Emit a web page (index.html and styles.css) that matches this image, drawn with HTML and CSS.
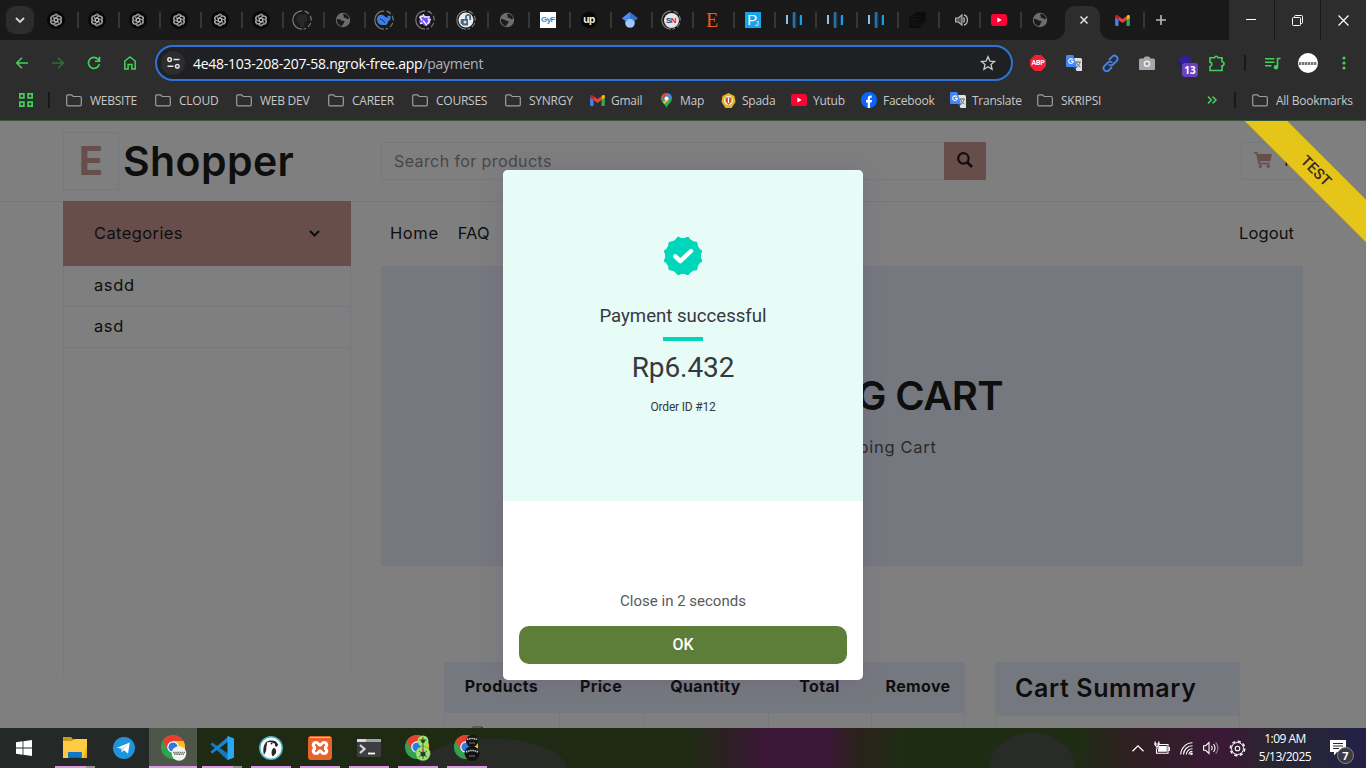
FILE: index.html
```html
<!DOCTYPE html>
<html lang="en">
<head>
<meta charset="utf-8">
<title>E Shopper - Payment</title>
<link rel="stylesheet" href="styles.css">
</head>
<body>
<svg class="defs" width="0" height="0">
  <symbol id="gpt" viewBox="0 0 18 18"><circle cx="9" cy="9" r="9" fill="#070707"/><g fill="none" stroke="#b4b6b9" stroke-width=".9"><path id="petal" d="M9 7.200 6.800 8.400V5.300a2.300 2.300 0 0 1 4.300-1.100M9 7.200l2.600 1.500"/><use href="#petal" transform="rotate(60 9 9)"/><use href="#petal" transform="rotate(120 9 9)"/><use href="#petal" transform="rotate(180 9 9)"/><use href="#petal" transform="rotate(240 9 9)"/><use href="#petal" transform="rotate(300 9 9)"/><circle cx="9" cy="9" r="5"/></g></symbol>
  <symbol id="ring" viewBox="0 0 20 20"><circle cx="10" cy="10" r="9.2" fill="none" stroke="#77797c" stroke-width="1.2" stroke-dasharray="28.9 2.5 5 2.3 5 2.3 5 2.3 2.5 2"  transform="rotate(90 10 10)"/></symbol>
  <symbol id="globe" viewBox="0 0 16 16"><circle cx="8" cy="8" r="7.200" fill="#6b6d70"/><path d="M8.500 1.800c2.800 0 5 1.900 5.600 4.400-.8 1.300-2.300 1.200-2.800.3-.4-.9-1.500-.4-2.300-.8-.9-.5.3-1.400-.5-2.200-.5-.6-.6-1.200 0-1.700zM1.900 7c1.500-.3 3 .2 4.300 1.200 1.200.9 2.900.2 3.300 1.400.4 1.300-1.200 1.600-1.500 2.600-.2.700-.3 1.400-.9 1.900C4.200 13.700 1.500 11 1.900 7z" fill="#1b1b1c"/></symbol>
  <symbol id="bars" viewBox="0 0 16 16"><path d="M0 3h2v9H0z" fill="#91bfe8"/><path d="M7 0h2.500v16H7z" fill="#2d6da6"/><path d="M14 3h2v10h-2z" fill="#18a0e0"/><path d="M6 1.500h1v13H6zM9.500 2h1v12h-1zM13 4h1v9h-1z" fill="#173854"/></symbol>
  <symbol id="gmail" viewBox="0 0 16 12"><path d="M0 2v9a1 1 0 0 0 1 1h2.600V4z" fill="#4285f4"/><path d="M12.400 4v8H15a1 1 0 0 0 1-1V2z" fill="#34a853"/><path d="M12.400 1.200v4.300L16 3V1.500c0-1.500-1.500-1.800-2.500-1.100z" fill="#fbbc04"/><path d="M3.600 5.500V1.200L8 4.500l4.400-3.300v4.300L8 8.800z" fill="#ea4335"/><path d="M0 1.500V3l3.600 2.500V1.200L2.500.4C1.500-.3 0 0 0 1.500z" fill="#c5221f"/></symbol>
  <symbol id="youtube" viewBox="0 0 16 12"><rect width="16" height="12" rx="2.800" fill="#ff0033"/><path d="M6.400 3.500v5L10.700 6z" fill="#fff"/></symbol>
  <symbol id="folder" viewBox="0 0 16 13"><path d="M.7 2a1.200 1.200 0 0 1 1.200-1.200h3.600l1.700 1.700h6.900a1.200 1.200 0 0 1 1.200 1.200v7a1.200 1.200 0 0 1-1.200 1.200H1.900A1.200 1.200 0 0 1 .7 10.700z" fill="none" stroke="#9c9ea1" stroke-width="1.200"/></symbol>
  <symbol id="translate" viewBox="0 0 16 16"><path d="M6 3h8.500A1.500 1.500 0 0 1 16 4.500V16h-5.500z" fill="#dfe1e3"/><path d="M9 7h6M12 6v1M10.500 7c.7 3 2 4.300 4 5M14 7c-.5 3-1.500 4-3.500 5.500" stroke="#66727a" stroke-width="1" fill="none"/><path d="M1.200 0h6L11 12H1.200A1.200 1.200 0 0 1 0 10.800V1.200A1.200 1.200 0 0 1 1.200 0z" fill="#4386f5"/><path d="M8 12h3l-2 3z" fill="#2653b5"/><path d="M6.800 4.700a2.300 2.300 0 1 0 .5 1.700H5" stroke="#fff" stroke-width="1.100" fill="none"/></symbol>
  <symbol id="chrome" viewBox="0 0 24 24"><circle cx="12" cy="12" r="12" fill="#31a350"/><path d="M12 6h10.400A12 12 0 0 1 12 24l5.200-9z" fill="#fbc116"/><path d="M1.600 6a12 12 0 0 1 20.800 0H12l-5.200 9z" fill="#e8402f"/><circle cx="12" cy="12" r="5.800" fill="#fff"/><circle cx="12" cy="12" r="4.600" fill="#3278df"/></symbol>
  <symbol id="cart" viewBox="0 0 18 16"><path d="M0 0h3.400l.5 2H18l-1.700 7.300H5.500l.3 1.500h9.900v1.700H4.300L2.200 1.700H0z"/><circle cx="6.300" cy="14.300" r="1.600"/><circle cx="14.200" cy="14.300" r="1.600"/></symbol>
</svg>

<div class="tabs">
  <button class="tab-search"><svg width="10" height="6" viewBox="0 0 10 6"><path d="m1 1 4 4 4-4" fill="none" stroke="#d6d7d8" stroke-width="1.800"/></svg></button>
  <div class="tab"><svg width="18" height="18"><use href="#gpt"/></svg></div>
  <div class="tab"><svg width="18" height="18"><use href="#gpt"/></svg></div>
  <div class="tab"><svg width="18" height="18"><use href="#gpt"/></svg></div>
  <div class="tab"><svg width="18" height="18"><use href="#gpt"/></svg></div>
  <div class="tab"><svg width="18" height="18"><use href="#gpt"/></svg></div>
  <div class="tab"><svg width="18" height="18"><use href="#gpt"/></svg></div>
  <div class="tab"><svg width="20" height="20" viewBox="0 0 20 20"><use href="#ring"/><path d="M7.700 17v-2.500c-2.500.3-2.300-1.200-3.400-1.700 1.400-.3 1.900 1.300 3.200.9.100-.4.300-.8.600-1-2.300-.4-3.600-1.600-3.600-4 0-1 .3-1.900.9-2.600-.2-.8-.1-1.700.2-2.300 1 0 1.900.5 2.500 1 1.200-.3 2.600-.3 3.800 0 .6-.5 1.500-1 2.500-1 .3.600.4 1.500.2 2.300.6.700.9 1.600.9 2.600 0 2.400-1.300 3.600-3.600 4 .5.500.6 1 .6 1.800V17z" fill="#26292b"/></svg></div>
  <div class="tab"><svg width="16" height="16"><use href="#globe"/></svg></div>
  <div class="tab"><svg width="20" height="20" viewBox="0 0 20 20"><use href="#ring"/><path d="M3 9c0-3 2.500-5 6-4 1.500 1.500 3 2 4 3 1-.3.500-2 1-2.500.8 1 2-.2 2.500.3C17 9 16 11 14 11.500c0 2-1 3-2 3.500H8c-3 0-5-3-5-6z" fill="#3e7de8"/><path d="M6 9c2 .5 4 2 5 4" stroke="#16294d" fill="none"/></svg></div>
  <div class="tab"><svg width="20" height="20" viewBox="0 0 20 20"><use href="#ring"/><path d="m8 4 2 2h4l2 3-1.500 2.500L15 14l-3 1-2 1.500L7.500 14H5l-1-3 1.500-2L5 6z" fill="#7450ee"/><path d="M8 4.500 9.500 7H15M15.500 9l-3 5M12 15.500l-4-5M5 13.500l2.500-.5M4.500 6.500 7 10.500M5 6.500h3M13 8.500l2 4" fill="none" stroke="#eeeaff" stroke-width="1.500"/></svg></div>
  <div class="tab"><svg width="20" height="20" viewBox="0 0 20 20"><use href="#ring"/><circle cx="10" cy="10" r="7.500" fill="#e9edf0"/><path d="M5 9h7v6.500H7L4.500 13z" fill="#47687e"/><path d="M10 9V7a2 2 0 0 1 4.200 0v3" fill="none" stroke="#47687e" stroke-width="1.800"/><circle cx="9" cy="12" r="1.500" fill="#d8e0e5"/></svg></div>
  <div class="tab"><svg width="16" height="16"><use href="#globe"/></svg></div>
  <div class="tab"><span class="fav fav-gyf">GyF</span></div>
  <div class="tab"><span class="fav fav-up">up</span></div>
  <div class="tab"><svg width="16" height="16" viewBox="0 0 16 16"><circle cx="8" cy="11" r="4.800" fill="#9fc9fb"/><path d="m8 0 8 6.200-4 3a4.600 4.600 0 0 0-8 0L0 6.200z" fill="#356fc7"/><path d="M8 0 0 6.200l4 3A4.500 4.500 0 0 1 8 6.500z" fill="#4b8df0"/></svg></div>
  <div class="tab"><span class="fav fav-sn"><svg width="20" height="20"><use href="#ring"/></svg><b>S<i>N</i></b></span></div>
  <div class="tab"><span class="fav fav-e">E</span></div>
  <div class="tab"><span class="fav fav-p">P<small>J</small></span></div>
  <div class="tab"><svg width="16" height="16"><use href="#bars"/></svg></div>
  <div class="tab"><svg width="16" height="16"><use href="#bars"/></svg></div>
  <div class="tab"><svg width="16" height="16"><use href="#bars"/></svg></div>
  <div class="tab"><svg width="17" height="16" viewBox="0 0 17 16"><path d="M1 5.500h10v10H1zM3.500 3h10v10M6 .8h10v10" fill="#111" stroke="#0a0a0a" stroke-width="1.200"/></svg></div>
  <div class="tab tab-audio"><svg width="13" height="12" viewBox="0 0 13 12"><path d="M.6 4v4h2.600L7 11V1L3.200 4z" fill="#555" stroke="#b4b5b6" stroke-width="1.100"/><path d="M8.500 3.500q1.800 2.500 0 5M9 1c4.500 1 4.500 9 0 10" fill="none" stroke="#b4b5b6" stroke-width="1.300"/></svg></div>
  <div class="tab"><svg width="16" height="12"><use href="#youtube"/></svg></div>
  <div class="tab last"><svg width="16" height="16"><use href="#globe"/></svg></div>
  <div class="tab-active"><svg width="8" height="8" viewBox="0 0 8 8"><path d="m.5.5 7 7m0-7-7 7" stroke="#e1e2e3" stroke-width="1.500"/></svg></div>
  <div class="tab tab-gmail"><svg width="15" height="11"><use href="#gmail"/></svg></div>
  <div class="tab-new"><svg width="10" height="10" viewBox="0 0 10 10"><path d="M5 0v10M0 5h10" stroke="#b9babb" stroke-width="1.600"/></svg></div>
  <div class="win">
    <span><svg width="10" height="10" viewBox="0 0 10 10"><path d="M0 4.500h10" stroke="#fff"/></svg></span>
    <span><svg width="11" height="11" viewBox="0 0 11 11"><path d="M2.500 2.500V1.500Q2.500.5 3.500.5h6q1 0 1 1v6q0 1-1 1h-1" fill="none" stroke="#fff"/><rect x=".5" y="2.500" width="8" height="8" rx="1" fill="none" stroke="#fff"/></svg></span>
    <span><svg width="11" height="11" viewBox="0 0 11 11"><path d="m.5.5 10 10m0-10-10 10" stroke="#fff" stroke-width="1.200"/></svg></span>
  </div>
</div>

<div class="toolbar">
  <svg class="nav" width="16" height="16" viewBox="0 0 16 16"><path d="M14 8H3m5-5.300L2.700 8 8 13.300" fill="none" stroke="#42d257" stroke-width="1.600"/></svg>
  <svg class="nav" width="16" height="16" viewBox="0 0 16 16"><path d="M2 8h11M8 2.700 13.300 8 8 13.300" fill="none" stroke="#2e6e38" stroke-width="1.600"/></svg>
  <svg class="nav" width="16" height="16" viewBox="0 0 16 16"><path d="M13.300 9A5.500 5.500 0 1 1 12 4.200L13.500 6M13.500 1.800V6.300H9" fill="none" stroke="#42d257" stroke-width="1.600"/></svg>
  <svg class="nav" width="16" height="16" viewBox="0 0 16 16"><path d="M2.800 14V6L8 2l5.200 4v8H9.900V9.500H6.100V14z" fill="none" stroke="#42d257" stroke-width="1.500"/></svg>
  <div class="url">
    <span class="site"><svg width="13" height="12" viewBox="0 0 13 12"><g fill="none" stroke="#e4e5e6" stroke-width="1.500"><circle cx="2.600" cy="2.600" r="1.800"/><path d="M6.500 2.600h6M.5 9.200h6"/><circle cx="10.300" cy="9.200" r="1.800"/></g></svg></span>
    <span class="addr">4e48-103-208-207-58.ngrok-free.app<i>/payment</i></span>
    <svg width="16" height="16" viewBox="0 0 16 16"><path d="m8 1.700 1.900 4.400 4.700.4L11 9.600l1.100 4.700L8 11.800l-4.100 2.500L5 9.600 1.400 6.500l4.700-.4z" fill="none" stroke="#c9cacc" stroke-width="1.300"/></svg>
  </div>
  <div class="ext">
    <span class="abp">ABP</span>
    <svg width="16" height="16"><use href="#translate"/></svg>
    <svg width="17" height="17" viewBox="0 0 17 17"><g fill="none" stroke="#3f83ec" stroke-width="1.900"><path d="m7 5 3-3.200a2.900 2.900 0 0 1 4.700 4L11 9.500a2.900 2.900 0 0 1-4.300-.2"/><path d="m10 12-3 3.200a2.900 2.900 0 0 1-4.700-4L6 7.500a2.900 2.900 0 0 1 4.300.2"/></g></svg>
    <svg width="16" height="14" viewBox="0 0 16 14"><path d="M1.500 2.500h3L6 .5h4l1.500 2h3A1.500 1.500 0 0 1 16 4v9a1 1 0 0 1-1 1H1a1 1 0 0 1-1-1V4a1.500 1.500 0 0 1 1.500-1.500z" fill="#a5a7aa"/><circle cx="8" cy="7.700" r="3.300" fill="#eee"/><circle cx="8" cy="7.700" r="1.800" fill="#89a"/></svg>
    <span class="badge-ext"><svg width="17" height="16" viewBox="0 0 17 16"><path d="m8 0 8 5-8 5-8-5z" fill="#371aa0"/><path d="m0 5 8 6v5l-7-5z" fill="#1b2a56"/></svg><b>13</b></span>
    <svg width="18" height="17" viewBox="0 0 18 17"><path d="M2 2.700h4.500A1.800 1.800 0 0 1 10 2.700h4v4a1.800 1.800 0 0 1 0 4V15.500H2v-4c2.500-.4 2.500-4 0-4.400z" fill="none" stroke="#42d257" stroke-width="1.600"/></svg>
  </div>
  <i class="vsep"></i>
  <svg class="media" width="16" height="13" viewBox="0 0 16 13"><path d="M0 1.800h9.500M0 5.300h9.500M0 8.800h6.500M12.500 10V1.500H15.500" fill="none" stroke="#42d257" stroke-width="1.600"/><circle cx="11" cy="10.300" r="2.200" fill="#42d257"/></svg>
  <span class="avatar"></span>
  <svg class="dots" width="4" height="14" viewBox="0 0 4 14"><g fill="#42d257"><circle cx="2" cy="2" r="1.600"/><circle cx="2" cy="7" r="1.600"/><circle cx="2" cy="12" r="1.600"/></g></svg>
</div>

<div class="bookmarks">
  <span class="bm-apps"><svg width="14" height="14" viewBox="0 0 14 14"><path d="M.9.900h4v4h-4zM9.100.900h4v4h-4zM.9 9.100h4v4h-4zM9.100 9.100h4v4h-4z" fill="none" stroke="#42d257" stroke-width="1.700"/></svg><i class="vsep"></i></span>
  <span class="bm"><svg width="16" height="13"><use href="#folder"/></svg>WEBSITE</span>
  <span class="bm"><svg width="16" height="13"><use href="#folder"/></svg>CLOUD</span>
  <span class="bm"><svg width="16" height="13"><use href="#folder"/></svg>WEB DEV</span>
  <span class="bm"><svg width="16" height="13"><use href="#folder"/></svg>CAREER</span>
  <span class="bm"><svg width="16" height="13"><use href="#folder"/></svg>COURSES</span>
  <span class="bm"><svg width="16" height="13"><use href="#folder"/></svg>SYNRGY</span>
  <span class="bm site-bm"><svg width="15" height="11"><use href="#gmail"/></svg>Gmail</span>
  <span class="bm site-bm"><svg width="15" height="15" viewBox="0 0 15 15"><path d="M2 5.500a5.500 5.500 0 0 1 11 0C13 9 9 11 7.500 15 6 11 2 9 2 5.500z" fill="#34a853"/><path d="M3 2.300A5.500 5.500 0 0 1 9 .2L4 7z" fill="#ea4335"/><path d="M9 .2a5.500 5.500 0 0 1 3.500 3L6 11 3.500 9z" fill="#4285f4"/><path d="m9 5.500-5.500 3.700L5.700 11l4-4z" fill="#fbbc04"/><circle cx="7.500" cy="5.500" r="2" fill="#fff"/></svg>Map</span>
  <span class="bm site-bm"><svg width="15" height="15" viewBox="0 0 15 15"><path d="m7.500 0 6 3 1 6-4 6h-6l-4-6 1-6z" fill="#e2b71f"/><circle cx="7.500" cy="7.500" r="4.500" fill="#f4efe2"/><path d="M4.500 4.500h6v4l-3 3.500-3-3.500z" fill="#dc5a28"/><path d="M7 5h1v5H7z" fill="#fff"/></svg>Spada</span>
  <span class="bm site-bm"><svg width="16" height="12"><use href="#youtube"/></svg>Yutub</span>
  <span class="bm site-bm"><svg width="16" height="16" viewBox="0 0 16 16"><circle cx="8" cy="8" r="8" fill="#0866ff"/><path d="M6.700 16v-5.500H5V8h1.700V6.800c0-2.300 1.200-3.500 4-3.200v2.100C9.200 5.600 9 6 9 6.900V8h2l-.4 2.500H9V16z" fill="#fff"/></svg>Facebook</span>
  <span class="bm site-bm"><svg width="16" height="16"><use href="#translate"/></svg>Translate</span>
  <span class="bm"><svg width="16" height="13"><use href="#folder"/></svg>SKRIPSI</span>
  <span class="bm-more"><svg width="10" height="8" viewBox="0 0 10 8"><path d="m1 .6 3.400 3.400L1 7.400M5.600.6 9 4 5.600 7.400" fill="none" stroke="#42d257" stroke-width="1.500"/></svg><i class="vsep"></i></span>
  <span class="bm"><svg width="16" height="13"><use href="#folder"/></svg>All Bookmarks</span>
</div>

<div class="viewport">
  <div class="shop">
    <header class="top">
      <div class="logo"><span class="logo-e">E</span><span class="logo-t">Shopper</span></div>
      <div class="search"><span class="field">Search for products</span><span class="go"><svg width="16" height="16" viewBox="0 0 16 16"><circle cx="6.400" cy="6.400" r="5.200" fill="none" stroke="#1c1c1c" stroke-width="2.200"/><path d="m10.500 10.500 4.500 4.500" stroke="#1c1c1c" stroke-width="2.600"/></svg></span></div>
      <div class="cart"><svg width="18" height="16" fill="#d19c97"><use href="#cart"/></svg><span>1</span></div>
    </header>
    <div class="main">
      <aside class="side">
        <div class="cat"><span>Categories</span><svg width="11" height="7" viewBox="0 0 11 7"><path d="m1 1 4.500 4.500L10 1" fill="none" stroke="#1c1c1c" stroke-width="2.100"/></svg></div>
        <div class="cats"><div>asdd</div><div>asd</div></div>
      </aside>
      <section class="content">
        <nav class="menu"><span class="m-home">Home</span><span class="m-faq">FAQ</span><span class="m-out">Logout</span></nav>
        <div class="banner"><h1>SHOPPING CART</h1><p>Home - Shopping Cart</p></div>
      </section>
    </div>
    <div class="lower">
      <div class="table">
        <div class="th"><span>Products</span><span>Price</span><span>Quantity</span><span>Total</span><span>Remove</span></div>
        <div class="tr"><span><svg width="14" height="16" viewBox="0 0 14 16"><path d="M1 16V1h9l3 3v12M10 1v3h3" fill="none" stroke="#777" stroke-width="1"/></svg></span><span></span><span></span><span></span><span></span></div>
      </div>
      <div class="summary"><h4>Cart Summary</h4><div></div></div>
    </div>
  </div>
  <div class="overlay">
    <div class="modal">
      <div class="paid">
        <svg width="40" height="40" viewBox="0 0 40 40"><g fill="#00d6b9"><rect x="5.400" y="5.400" width="29.200" height="29.200" rx="2.500"/><rect x="5.400" y="5.400" width="29.200" height="29.200" rx="2.500" transform="rotate(30 20 20)"/><rect x="5.400" y="5.400" width="29.200" height="29.200" rx="2.500" transform="rotate(60 20 20)"/><circle cx="20" cy="20" r="18"/></g><path d="m12.300 20.300 5 4.800L28 15" fill="none" stroke="#fff" stroke-width="4.400" stroke-linecap="round" stroke-linejoin="round"/></svg>
        <p class="ok-title">Payment successful</p>
        <i class="rule"></i>
        <p class="amount">Rp6.432</p>
        <p class="order">Order ID #12</p>
      </div>
      <div class="foot"><p>Close in 2 seconds</p><button>OK</button></div>
    </div>
    <div class="ribbon"><span>TEST</span></div>
  </div>
</div>

<div class="taskbar">
  <span class="app start"><svg width="16" height="16" viewBox="0 0 16 16"><path d="M0 2.200 6.600 1.300V7.600H0zM7.400 1.200 16 0v7.600H7.400zM0 8.400h6.600v6.300L0 13.800zM7.400 8.400H16V16l-8.600-1.200z" fill="#fff"/></svg></span>
  <span class="app run more"><svg width="24" height="22" viewBox="0 0 24 22"><path d="M0 0h8l2 2v3H0z" fill="#c89b1a"/><path d="M0 4h9l2-2h13v19H0z" fill="#ffcb45"/><path d="m24 9-4 12h4z" fill="#efad1c"/><path d="M5 21v-5q0-1 1-1h12q1 0 1 1v5z" fill="#1277c4"/><path d="M8 20h8v1H8z" fill="#0b5fa0"/></svg></span>
  <span class="app"><svg width="22" height="22" viewBox="0 0 22 22"><circle cx="11" cy="11" r="11" fill="#1f94dc"/><path d="M4 10.800 16.800 5.500 15 16.500l-4.200-3.200-2 2-.4-3.500z" fill="#fff"/><path d="m8.400 11.800 6-4.300-4.500 5.300-1 2.500z" fill="#b9daf0"/></svg></span>
  <span class="app run active"><svg width="26" height="26" viewBox="0 0 26 26"><use href="#chrome" width="24" height="24"/><circle cx="18" cy="18.500" r="7.300" fill="#f3f3f1"/><path d="M12 17.500h12m-11 1.700h10" stroke="#777" stroke-width="1.400" stroke-dasharray="1.600 .6"/></svg></span>
  <span class="app run more"><svg width="24" height="24" viewBox="0 0 24 24"><path d="m.4 8.200 1.800-1.700L24 21.500 17.500 24z" fill="#1478c0"/><path d="m.4 15.800 1.800 1.700L19 5V0z" fill="#1b84cf"/><path d="M17.500 7v10l-6.700-5z" fill="#1f2a14"/><path d="m17.500 0 6.500 2.500v19L17.500 24z" fill="#29a8f2"/></svg></span>
  <span class="app run"><svg width="24" height="24" viewBox="0 0 24 24"><circle cx="12" cy="12" r="11.200" fill="#fbfbfb" stroke="#48b6ca" stroke-width="1.500"/><path d="M5 19C3.500 14 4.500 8 8 5.500 10 4 14 4 17 5.500l2 3-1.500 2-3-.5-1-2-3-1.500C8 8 7 11 7.500 14z" fill="#2b2523"/><path d="M8 6.500q4-1 6 .5l3 1-.5 2.500-4 1-1.500 4.500-4 3z" fill="#fff"/><path d="M14.500 12c2 0 3 2.500 2.500 5l-3 3.500c-2-2-2-6 .5-8.500z" fill="#2b2523"/><circle cx="12.500" cy="7.500" r="1" fill="#2b2523"/><path d="m16 7 3 1-1 2.500-2-.5z" fill="#2b2523"/></svg></span>
  <span class="app run"><svg width="24" height="24" viewBox="0 0 24 24"><rect width="24" height="24" rx="3" fill="#e8632b"/><path d="M2 1.500h20" stroke="#f9bd96"/><path d="M8 6.500c-3 0-3.500 3.500-1.500 4.500v2C4.500 14 5 17.500 8 17.500s2.500-2.800 4-2.800 1 2.800 4 2.800 3.500-3.500 1.500-4.500v-2c2-1 1.500-4.500-1.500-4.500s-2.500 2.800-4 2.800-1-2.800-4-2.800z" fill="none" stroke="#fff" stroke-width="3"/></svg></span>
  <span class="app run"><svg width="24" height="18" viewBox="0 0 24 18"><rect width="24" height="18" rx="1" fill="#3d3d42"/><path d="M0 0h24v3H0z" fill="#a1a3a5"/><path d="M0 0h9v3H0z" fill="#d8dadc"/><path d="m3 6 4.500 4L3 14" fill="none" stroke="#d4d5d6" stroke-width="2.300"/><path d="M11 14.500h7" stroke="#fff" stroke-width="1.800"/></svg></span>
  <span class="app run"><svg width="26" height="26" viewBox="0 0 26 26"><use href="#chrome" width="24" height="24"/><circle cx="18" cy="6" r="5.500" fill="#9ae375"/><circle cx="18" cy="18.500" r="7.300" fill="#9ae375" stroke="#52843c" stroke-dasharray="1.500 1.500"/><path d="M18 2v22M14.500 5h7M14 16l8 6m0-6-8 6" stroke="#3e6b38" stroke-width="1"/><circle cx="18" cy="6" r="2" fill="#233d25"/><circle cx="18" cy="19" r="2.500" fill="#233d25"/><circle cx="18" cy="16" r="1.200" fill="#e34f38"/><circle cx="18" cy="4" r="1" fill="#e34f38"/></svg></span>
  <span class="app run"><svg width="26" height="26" viewBox="0 0 26 26"><use href="#chrome" width="24" height="24"/><circle cx="18" cy="6" r="6" fill="#121212"/><circle cx="18" cy="18.500" r="7.500" fill="#121212"/><path d="M13 4.500q5-2 10 0M12 17q6-3 12 0" fill="none" stroke="#c7c7c7" stroke-width="1.700" stroke-dasharray="1.500 .7"/><path d="M15 8h6M15 21h6" stroke="#777"/></svg></span>
  <div class="tray">
    <svg width="12" height="7" viewBox="0 0 12 7"><path d="m.5 6.300 5.500-5.500 5.500 5.500" fill="none" stroke="#fff" stroke-width="1.300"/></svg>
    <svg width="16" height="14" viewBox="0 0 16 14"><path d="M5 3.500h9v8.700H2.500V8" fill="none" stroke="#fff" stroke-width="1.100"/><path d="M4.500 5h8.300v5.700H4zM14.500 6H16v4h-1.500z" fill="#fff"/><path d="M1.200.5v3a1.800 1.800 0 0 0 3.600 0v-3M0 3h6M3 5v3" stroke="#fff" stroke-width="1.200" fill="none"/></svg>
    <svg width="13" height="13" viewBox="0 0 13 13"><g fill="none" stroke="#fff" stroke-width="1.100"><path d="M.7 12.500A12 12 0 0 1 12.500.8M3.500 12.500A9 9 0 0 1 12.500 3.700M6.300 12.500a6 6 0 0 1 6.200-5.800"/><path d="M9 12.500a3.500 3.500 0 0 1 3.500-3.300"/></g><circle cx="11.500" cy="11.700" r="1.300" fill="#fff"/></svg>
    <svg width="16" height="14" viewBox="0 0 16 14"><path d="M.6 4.700v4.600h2L6 12.500v-11L2.600 4.700z" fill="none" stroke="#fff" stroke-width="1.100"/><path d="M8.500 4.700q1.500 2.300 0 4.600M10.500 3q3 4 0 8" fill="none" stroke="#fff" stroke-width="1.100"/><path d="M12.700 1.300q4.500 5.700 0 11.400" fill="none" stroke="#888" stroke-width="1.100"/></svg>
    <svg width="17" height="17" viewBox="0 0 17 17"><circle cx="8.500" cy="8.500" r="7.200" fill="none" stroke="#fff" stroke-width="1.500" stroke-dasharray="3.200 2.450"/><circle cx="8.500" cy="8.500" r="6" fill="none" stroke="#fff"/><circle cx="8.500" cy="8.500" r="2.300" fill="none" stroke="#fff" stroke-width="1.100"/></svg>
    <div class="clock"><span>1:09 AM</span><span>5/13/2025</span></div>
    <div class="note"><svg width="16" height="16" viewBox="0 0 16 16"><path d="M0 0h16v12H7l-3 3.500V12H0z" fill="#fff"/><path d="M3 3.500h10M3 6h10M3 8.500h6" stroke="#26253a"/></svg><b>7</b></div>
  </div>
</div>
</body>
</html>
```
FILE: styles.css
```css
* { box-sizing: border-box; }
body {
  margin: 0;
  width: 1366px;
  height: 768px;
  overflow: hidden;
  display: flex;
  flex-direction: column;
  background: #2d2d2d;
  font-family: "Open Sans", "Noto Sans", sans-serif;
}
svg { display: block; flex: none; overflow: visible; }
p, h1, h4 { margin: 0; }
button { border: 0; padding: 0; }
.defs { position: absolute; }

/* tab strip */
.tabs { display: flex; height: 40px; flex: none; background: #191919; }
.tab-search {
  width: 28px; height: 28px; margin: 6px 4px 6px 6px; border-radius: 9px;
  background: #2d2d2d; display: flex; align-items: center; justify-content: center;
}
.tab {
  width: 41px; height: 40px; flex: none; padding-right: 5px;
  display: flex; align-items: center; justify-content: center;
  background: linear-gradient(#363636, #363636) 39px 12px / 2px 16px no-repeat;
}
.tab.last { width: 43px; background: none; padding: 0 7px 0 0; }
.tab-audio { padding-left: 5px; padding-right: 4px; }
.tab-active {
  width: 35px; height: 34px; margin-top: 6px; background: #2d2d2d; border-radius: 10px 10px 0 0;
  display: flex; align-items: center; justify-content: center; padding: 0 0 6px 3px; position: relative;
  flex: none;
}
.tab-active::before, .tab-active::after {
  content: ""; position: absolute; bottom: 0; width: 11px; height: 11px;
}
.tab-active::before { left: -11px; background: radial-gradient(circle at 0 0, transparent 10.500px, #2d2d2d 11px); }
.tab-active::after { right: -11px; background: radial-gradient(circle at 100% 0, transparent 10.500px, #2d2d2d 11px); }
.tab-gmail { width: 45px; padding: 0; background-position: 43px 12px; }
.tab-new { width: 31px; display: flex; align-items: center; justify-content: center; }
.fav { display: flex; align-items: center; justify-content: center; width: 16px; height: 16px; line-height: 16px; }
.fav-gyf { background: #fff; color: #4f81a8; font: bold 8px/16px "Liberation Sans", sans-serif; letter-spacing: -.6px; }
.fav-up { background: #060606; color: #eee; border-radius: 50%; font: bold 10px/13px "Inter", sans-serif; letter-spacing: -.5px; padding-bottom: 2px; }
.fav-sn { position: relative; width: 20px; height: 20px; }
.fav-sn svg { position: absolute; inset: 0; }
.fav-sn b { width: 15px; height: 15px; border-radius: 50%; background: #e3e5e9; color: #263a68; font: bold 8px/15px "Liberation Sans", sans-serif; text-align: center; letter-spacing: -.5px; }
.fav-sn i { color: #d22; font-style: normal; }
.fav-e { color: #f1571f; font: 20px/16px "Liberation Serif", serif; }
.fav-p { background: #18a4ec; color: #fff; font: 15px/16px "Liberation Sans", sans-serif; }
.fav-p small { font-size: 7px; align-self: flex-end; line-height: 9px; margin-left: -2px; }
.win { margin-left: auto; width: 137px; display: flex; background: #2d2d2d; }
.win span { flex: 1; display: flex; align-items: center; justify-content: center; padding-right: 1px; }
.win span + span { border-left: 1px solid #191919; }

/* toolbar */
.toolbar { display: flex; align-items: center; height: 46px; flex: none; padding: 0 20px 0 14px; }
.nav { margin-right: 20px; }
.url {
  width: 858px; height: 36px; margin-left: -3px; border: 2px solid #2e73d8; border-radius: 18px; background: #1f2023;
  display: flex; align-items: center; padding: 0 15px 0 4px;
}
.site { width: 24px; height: 24px; border-radius: 50%; background: #2d2d2d; display: flex; align-items: center; justify-content: center; }
.addr { margin-left: 8px; flex: 1; font-size: 14px; letter-spacing: -.27px; color: #fff; }
.addr i { font-style: normal; color: #b1b3b6; }
.ext { margin-left: 17px; width: 198px; display: flex; align-items: center; gap: 20px; }
.abp {
  width: 16px; height: 16px; background: #f41f35; color: #fff; font: bold 7px/16px "Roboto", sans-serif; text-align: center; letter-spacing: -.2px;
  clip-path: polygon(30% 0, 70% 0, 100% 30%, 100% 70%, 70% 100%, 30% 100%, 0 70%, 0 30%);
}
.badge-ext { position: relative; width: 20px; margin-left: 2px; }
.badge-ext + svg { margin-left: -9px; }
.badge-ext b {
  position: absolute; left: 5px; top: 8px; width: 16px; height: 14px; border-radius: 3px; background: #6b3fc6; color: #fff;
  font: bold 10px/14px "Open Sans", sans-serif; text-align: center;
}
.vsep { width: 2px; height: 16px; background: #191919; flex: none; }
.toolbar > .vsep { margin-left: 16px; }
.media { margin-left: 19px; }
.avatar {
  width: 20px; height: 20px; border-radius: 50%; margin-left: 17px;
  background: repeating-linear-gradient(100deg, #777 0 2px, #ccc 2px 3px) 1px 9px / 18px 3px no-repeat #fff;
}
.dots { margin-left: 24px; }

/* bookmarks */
.bookmarks {
  height: 35px; flex: none; padding-left: 19px; display: grid; align-items: center; padding-bottom: 7px;
  grid-template-columns: 47px 89px 81px 92px 84px 93px 85px 69px 62px 70px 70px 89px 87px 170px 45px 110px;
  font-size: 12px; color: #c7c8ca; white-space: nowrap;
}
.bm { display: flex; align-items: center; gap: 8px; letter-spacing: -.25px; }
.site-bm { gap: 6px; }
.bm-apps { display: flex; align-items: center; gap: 15px; }
.bm-more { display: flex; align-items: center; gap: 17px; }

/* shop */
.viewport { height: 607px; flex: none; position: relative; overflow: hidden; background: #fff; }
.shop { height: 607px; font-family: "Inter", sans-serif; font-size: 16px; color: #1c1c1c; }
.top { height: 81px; border-bottom: 1px solid #edf1ff; display: flex; align-items: center; padding: 0 63px; }
.logo { display: flex; align-items: center; width: 318px; font-size: 41px; font-weight: 600; line-height: 56px; }
.logo-e { width: 56px; height: 58px; border: 1px solid #edf1ff; color: #d19c97; text-align: center; font-weight: 700; font-size: 40px; margin-right: 4px; }
.logo-t { letter-spacing: .4px; }
.search { width: 605px; height: 38px; display: flex; }
.field { flex: 1; border: 1px solid #edf1ff; border-right: 0; line-height: 36px; padding-left: 12px; color: #8f918b; letter-spacing: .4px; }
.go { width: 42px; background: #d19c97; display: flex; align-items: center; justify-content: center; padding-bottom: 2px; }
.cart { margin-left: auto; width: 62px; height: 38px; border: 1px solid #edf1ff; display: flex; align-items: center; gap: 10px; padding: 0 0 2px 12px; }
.cart span { line-height: 20px; }
.main { display: flex; padding-left: 63px; gap: 30px; height: 474px; margin-top: -1px; }
.side { width: 288px; }
.cat { height: 65px; background: #d19c97; display: flex; align-items: center; justify-content: space-between; padding: 0 31px; font-size: 16.5px; letter-spacing: .4px; }
.cat span { margin-top: -2px; }
.cats { height: 409px; border: 1px solid #edf1ff; border-width: 0 1px; }
.cats div { height: 41px; line-height: 38px; padding-left: 30px; border-bottom: 1px solid #edf1ff; font-size: 16.5px; letter-spacing: .6px; }
.content { width: 922px; }
.menu { height: 65px; display: flex; align-items: center; padding: 0 9px 2px; gap: 20px; font-size: 16.5px; }
.m-home { letter-spacing: .6px; }
.m-faq { letter-spacing: .1px; margin-left: -1px; }
.m-out { margin-left: auto; letter-spacing: .1px; }
.banner { height: 300px; background: #edf1ff; display: flex; flex-direction: column; align-items: center; padding-top: 102px; }
.banner h1 { font-size: 40px; line-height: 56px; font-weight: 600; letter-spacing: -.6px; }
.banner p { margin-top: 11px; line-height: 24px; color: #555; font-size: 16.5px; letter-spacing: .7px; }
.lower { display: flex; gap: 30px; padding-left: 444px; margin-top: -13px; }
.table { width: 521px; }
.th, .tr { display: grid; grid-template-columns: 115px 84px 125px 103px 94px; }
.th { height: 51px; background: #edf1ff; font-weight: 700; text-align: center; line-height: 49px; letter-spacing: .35px; }
.tr { height: 20px; }
.tr span { border-left: 1px solid #edf1ff; padding: 13px 0 0 27px; }
.tr span:last-child { border-right: 1px solid #edf1ff; }
.summary { width: 245px; }
.summary h4 { height: 54px; line-height: 53px; background: #edf1ff; padding-left: 20px; font-size: 25px; font-weight: 600; letter-spacing: .6px; }
.summary div { height: 20px; border: 1px solid #edf1ff; border-width: 0 1px; }

/* payment dialog */
.overlay { position: absolute; inset: 0; background: rgba(0, 0, 0, .5); border-top: 1px solid #34553a; font-family: "Roboto", sans-serif; }
.viewport { margin-top: -1px; height: 608px; padding-top: 1px; }
.modal {
  position: absolute; left: 503px; top: 49px; width: 360px; height: 510px; border-radius: 5px; overflow: hidden; background: #fff;
  display: flex; flex-direction: column; box-shadow: 0 0 24px rgba(75, 55, 115, .18);
}
.paid { height: 331px; background: #e7fbf7; display: flex; flex-direction: column; align-items: center; padding-top: 66px; color: #37383d; }
.ok-title { margin-top: 28px; font-size: 18.600px; line-height: 24px; }
.rule { width: 40px; height: 4px; background: #00d6b9; margin-top: 9px; }
.amount { font-size: 28px; line-height: 36px; margin-top: 9px; letter-spacing: -.1px; }
.order { font-size: 12px; line-height: 16px; margin-top: 13px; letter-spacing: -.2px; }
.foot { flex: 1; display: flex; flex-direction: column; justify-content: flex-end; padding: 16px; text-align: center; }
.foot p { font-size: 15px; line-height: 20px; color: #565a60; margin-bottom: 15px; }
.foot button { height: 38px; border-radius: 10px; background: #5d7e39; color: #fff; font: 500 16px/38px "Roboto", sans-serif; }
.ribbon { position: absolute; right: 0; top: 0; width: 122px; height: 124px; overflow: hidden; }
.ribbon span {
  position: absolute; left: -58px; top: 35px; width: 260px; height: 30px; transform: rotate(45deg); background: #e5c618;
  color: #3e2723; font: 500 15px/31px "Roboto", sans-serif; text-align: center;
}

/* taskbar */
.taskbar {
  height: 40px; flex: none; display: flex;
  background:
    radial-gradient(ellipse 44px 38px at 1032px 42px, #292b29 96%, transparent),
    radial-gradient(ellipse 76px 32px at 492px 42px, #292b27 96%, transparent),
    linear-gradient(90deg, #242827 0, #242827 149px, #1f2a14 198px, #1f2a14 690px, #2b2021 725px, #3b1738 765px, #3b1738 825px, #2b211d 855px, #1f2c14 905px, #1f2c14 1080px, #2f1f23 1130px, #3a1937 1225px, #28252f 1270px, #25243b 1320px, #232046 1366px);
}
.app { width: 48px; margin-right: 1px; flex: none; display: flex; align-items: center; justify-content: center; position: relative; }
.app.start { margin-right: 3px; }
.app.active { background: #4d5648; }
.app.active svg { margin-left: 2px; }
.app.run::after { content: ""; position: absolute; left: 4px; right: 4px; bottom: 0; height: 2px; background: #dc98e6; }
.app.active::after { left: 0; right: 0; }
.app.more::after { background: linear-gradient(90deg, #dc98e6 31px, #929292 31px); }
.tray { margin-left: auto; display: flex; align-items: center; padding-right: 12px; color: #fff; }
.tray > svg + svg { margin-left: 10px; }
.clock { width: 66px; margin-left: 6px; display: flex; flex-direction: column; align-items: center; font-size: 12px; line-height: 18px; letter-spacing: -.5px; }
.note { position: relative; margin-left: 12px; width: 24px; }
.note b {
  position: absolute; left: 7px; top: 7px; width: 17px; height: 17px; border-radius: 50%; background: #3b3b42; border: 1px solid #888;
  font: bold 11px/15px "Open Sans", sans-serif; text-align: center;
}
```
